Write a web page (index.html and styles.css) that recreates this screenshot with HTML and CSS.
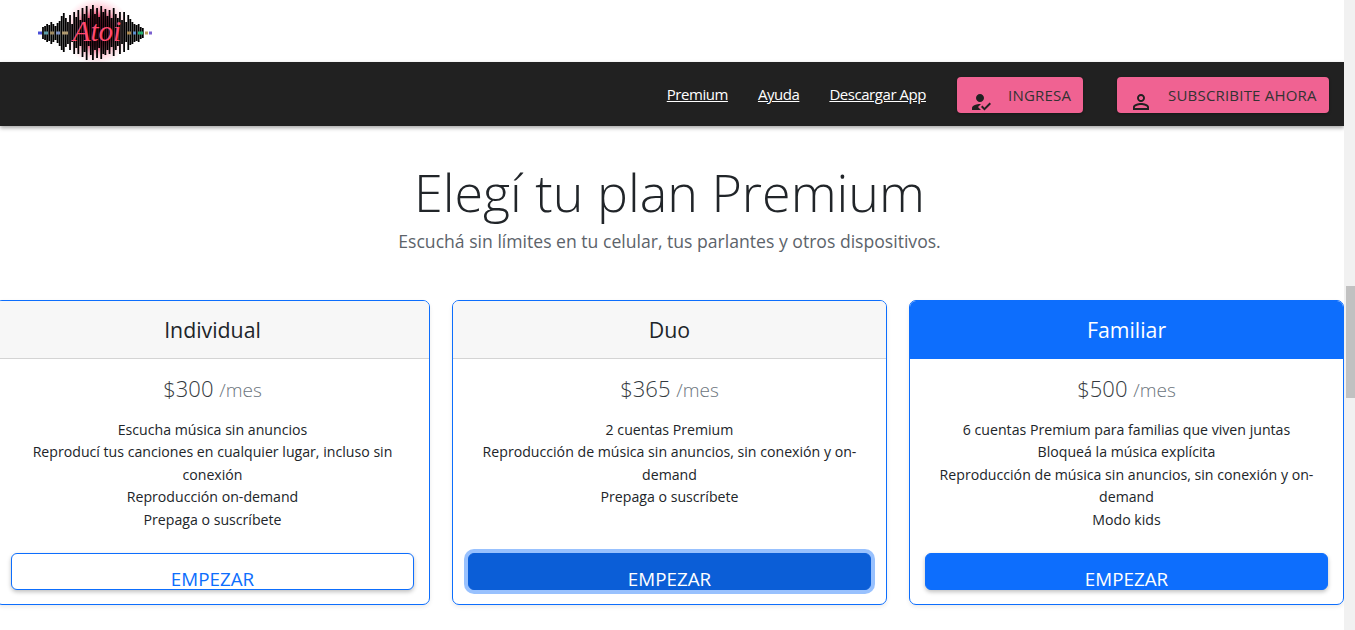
FILE: index.html
```html
<!DOCTYPE html>
<html lang="es">
<head>
    <meta charset="UTF-8">
    <meta name="viewport" content="width=device-width, initial-scale=1.0">
    <title>Atoi - Planes Premium</title>
    <link rel="stylesheet" href="styles.css">
</head>
<body>
    <div class="pagina">
        <!-- Logo -->
        <header class="cabecera">
            <svg class="logo" viewBox="0 0 120 62" width="120" height="62" aria-label="Atoi">
                <defs>
                    <radialGradient id="halo">
                        <stop offset="0" stop-color="#b00a30" stop-opacity="1"/>
                        <stop offset="0.45" stop-color="#d81848" stop-opacity="0.8"/>
                        <stop offset="0.7" stop-color="#ff7a98" stop-opacity="0.4"/>
                        <stop offset="1" stop-color="#ffc0d0" stop-opacity="0"/>
                    </radialGradient>
                    <filter id="suave" filterUnits="userSpaceOnUse" x="0" y="0" width="120" height="62"><feGaussianBlur stdDeviation="0.5"/></filter>
                </defs>
                <ellipse cx="62" cy="31" rx="34" ry="34" fill="url(#halo)"/>
                <path class="logo-barras" filter="url(#suave)" transform="translate(0.7) scale(1.04 1)" d="M7 27V39M9 26V40M11 24V42M13 25V41M15 22V44M17 24V42M19 26V40M21 23V43M23 21V46M25 16V50M27 13V52M29 18V47M31 22V44M33 15V50M35 24V42M37 12V54M39 17V48M41 10V54M43 20V46M45 8V57M47 14V52M49 6V60M51 18V46M53 9V55M55 5V60M57 14V50M59 8V58M61 17V48M63 6V59M65 12V54M67 9V55M69 16V50M71 10V54M73 18V47M75 8V56M77 14V50M79 18V46M81 12V54M83 20V44M85 12V52M87 22V42M89 15V50M91 19V45M93 22V44M95 24V42M97 25V41M99 24V42M101 27V39M103 28V38"/>
                <g class="logo-linea" filter="url(#suave)">
                    <path d="M3 33H7" stroke="#4a4fd8"/>
                    <path d="M9 33H13" stroke="#5a9fa8"/>
                    <path d="M15 33H19" stroke="#a08a60"/>
                    <path d="M21 33H25" stroke="#7a8fc0"/>
                    <path d="M27 33H33" stroke="#b09a70"/>
                    <path d="M92 33H96" stroke="#b08a50"/>
                    <path d="M98 33H101" stroke="#5a8fd0"/>
                    <path d="M103 33H108" stroke="#20b070"/>
                    <path d="M110 33H113" stroke="#c0a060"/>
                    <path d="M114 33H117" stroke="#7a5fd0"/>
                </g>
                <text class="logo-texto" x="62" y="41" text-anchor="middle">Atoi</text>
            </svg>
        </header>

        <nav class="barra">
            <a class="barra-link" href="#">Premium</a>
            <a class="barra-link" href="#">Ayuda</a>
            <a class="barra-link" href="#">Descargar App</a>
            <a class="boton-rosa boton-ingresa" href="#">
                <svg class="boton-icono" viewBox="0 0 24 24" width="24" height="24"><path d="M9 17l3-2.94c-.39-.04-.68-.06-1-.06-2.67 0-8 1.34-8 4v2h9l-3-3zm2-5c2.21 0 4-1.79 4-4s-1.79-4-4-4-4 1.79-4 4 1.79 4 4 4m4.47 8.5L12 17l1.4-1.41 2.07 2.08 5.13-5.17 1.4 1.41z"/></svg>
                <span>Ingresa</span>
            </a>
            <a class="boton-rosa boton-subscribir" href="#">
                <svg class="boton-icono" viewBox="0 0 24 24" width="24" height="24"><path d="M12 5.9c1.16 0 2.1.94 2.1 2.1s-.94 2.1-2.1 2.1S9.9 9.16 9.9 8s.94-2.1 2.1-2.1m0 9c2.97 0 6.1 1.46 6.1 2.1v1.1H5.9V17c0-.64 3.13-2.1 6.1-2.1M12 4C9.79 4 8 5.79 8 8s1.79 4 4 4 4-1.79 4-4-1.79-4-4-4zm0 9c-2.67 0-8 1.34-8 4v3h16v-3c0-2.66-5.33-4-8-4z"/></svg>
                <span>Subscribite ahora</span>
            </a>
        </nav>

        <!-- Titulo -->
        <section class="titulo">
            <h1>Elegí tu plan Premium</h1>
            <p>Escuchá sin límites en tu celular, tus parlantes y otros dispositivos.</p>
        </section>

        <!-- Planes -->
        <section class="planes">
            <article class="plan">
                <h4 class="plan-nombre">Individual</h4>
                <div class="plan-cuerpo">
                    <div class="plan-precio">$300 <small>/mes</small></div>
                    <ul class="plan-lista">
                        <li>Escucha música sin anuncios</li>
                        <li>Reproducí tus canciones en cualquier lugar, incluso sin conexión</li>
                        <li>Reproducción on-demand</li>
                        <li>Prepaga o suscríbete</li>
                    </ul>
                    <button class="empezar empezar-borde">Empezar</button>
                </div>
            </article>

            <article class="plan">
                <h4 class="plan-nombre">Duo</h4>
                <div class="plan-cuerpo">
                    <div class="plan-precio">$365 <small>/mes</small></div>
                    <ul class="plan-lista">
                        <li>2 cuentas Premium</li>
                        <li>Reproducción de música sin anuncios, sin conexión y on-demand</li>
                        <li>Prepaga o suscríbete</li>
                    </ul>
                    <button class="empezar empezar-foco">Empezar</button>
                </div>
            </article>

            <article class="plan">
                <h4 class="plan-nombre plan-nombre-azul">Familiar</h4>
                <div class="plan-cuerpo">
                    <div class="plan-precio">$500 <small>/mes</small></div>
                    <ul class="plan-lista">
                        <li>6 cuentas Premium para familias que viven juntas</li>
                        <li>Bloqueá la música explícita</li>
                        <li>Reproducción de música sin anuncios, sin conexión y on-demand</li>
                        <li>Modo kids</li>
                    </ul>
                    <button class="empezar">Empezar</button>
                </div>
            </article>
        </section>
    </div>

    <!-- Barra de scroll -->
    <div class="scroll"><div class="scroll-pulgar"></div></div>
</body>
</html>
```

FILE: styles.css
```css
* {
    margin: 0;
    padding: 0;
    box-sizing: border-box;
}

html, body {
    height: 630px;
    overflow: hidden;
}

body {
    display: flex;
    font-family: 'Open Sans', 'Noto Sans', sans-serif;
    background-color: #fff;
    color: #212529;
}

.pagina {
    width: 1344px;
    overflow: hidden;
}

/* Logo */
.cabecera {
    height: 62px;
    padding-left: 35px;
}

.logo {
    display: block;
}

.logo-barras {
    fill: none;
    stroke: #000;
    stroke-width: 1.7;
}

.logo-linea {
    fill: none;
    stroke-width: 3;
}

.logo-texto {
    font-family: 'Liberation Serif', serif;
    font-style: italic;
    font-size: 29px;
    fill: #ff4a70;
}

/* Barra de navegacion */
.barra {
    height: 64px;
    display: flex;
    align-items: center;
    padding-right: 15px;
    justify-content: flex-end;
    background-color: #212121;
    box-shadow: 0 2px 4px rgba(0, 0, 0, 0.35);
    position: relative;
}

.barra-link {
    color: #fff;
    font-size: 15px;
    margin-right: 30px;
    letter-spacing: -0.45px;
}

.boton-rosa {
    height: 36px;
    margin-top: 2px;
    display: flex;
    align-items: flex-start;
    background-color: #f06292;
    color: #333;
    border-radius: 4px;
    padding-left: 12px;
    text-decoration: none;
    text-transform: uppercase;
    font-size: 15px;
    letter-spacing: 0.2px;
    line-height: 37px;
    box-shadow: 0 1px 3px rgba(0, 0, 0, 0.3);
}

.boton-ingresa {
    width: 126px;
    margin-left: 1px;
    margin-right: 34px;
}

.boton-subscribir {
    width: 212px;
}

.boton-icono {
    margin-top: 13px;
    margin-right: 15px;
    fill: #212121;
    flex-shrink: 0;
}

/* Titulo */
.titulo {
    text-align: center;
    padding-top: 30px;
    margin-left: -5px;
}

.titulo h1 {
    font-size: 52px;
    font-weight: 350;
    line-height: 72px;
}

.titulo p {
    font-size: 17.6px;
    font-weight: 400;
    line-height: 27px;
    color: #5c636a;
}

/* Planes */
.planes {
    display: grid;
    grid-template-columns: repeat(3, 435px);
    gap: 22px;
    margin-left: -5px;
    margin-top: 45px;
}

.plan {
    height: 305px;
    border: 1px solid #0d6efd;
    border-radius: 7px;
    box-shadow: 0 2px 4px rgba(0, 0, 0, 0.08);
}

.plan-nombre {
    height: 58px;
    line-height: 57px;
    text-align: center;
    font-size: 21.3px;
    font-weight: 400;
    background-color: #f7f7f7;
    border-bottom: 1px solid #d4d4d4;
    border-radius: 6px 6px 0 0;
}

.plan-nombre-azul {
    background-color: #0d6efd;
    border-bottom-color: #0d6efd;
    color: #fff;
}

.plan-cuerpo {
    padding: 13px 15px 0;
    text-align: center;
}

.plan-precio {
    font-size: 22px;
    font-weight: 350;
    line-height: 32px;
    color: #343a40;
}

.plan-precio small {
    font-size: 19px;
    color: #6c757d;
}

.plan-lista {
    list-style: none;
    height: 113px;
    margin-top: 13px;
    margin-bottom: 21px;
    font-size: 14.15px;
    line-height: 22.4px;
}

/* Botones */
.empezar {
    display: block;
    width: 100%;
    height: 37px;
    padding-top: 15px;
    font-family: inherit;
    font-size: 18.8px;
    line-height: 20px;
    text-transform: uppercase;
    color: #fff;
    background-color: #0d6efd;
    border: 1px solid #0d6efd;
    border-radius: 6px;
    box-shadow: 0 2px 4px rgba(0, 0, 0, 0.25);
}

.empezar-borde {
    background-color: #fff;
    color: #0d6efd;
}

.empezar-foco {
    background-color: #0b5ed7;
    border-color: #0b5ed7;
    box-shadow: 0 0 0 4px rgba(49, 132, 253, 0.5);
}

/* Barra de scroll */
.scroll {
    width: 11px;
    height: 630px;
    background-color: #f1f1f1;
    padding: 286px 0 0 2px;
}

.scroll-pulgar {
    width: 9px;
    height: 112px;
    background-color: #c1c1c1;
}
```
